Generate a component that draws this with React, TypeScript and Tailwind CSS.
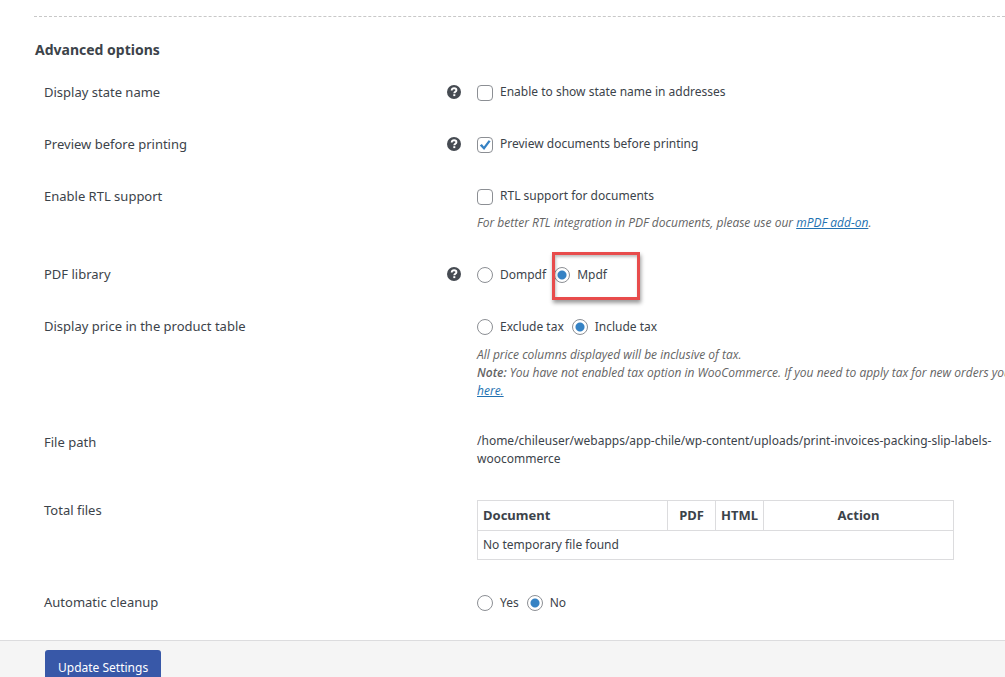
import type { ReactNode } from "react";

const radioClass =
  "size-4 shrink-0 appearance-none rounded-full border border-[#8c8f94] bg-white checked:bg-[radial-gradient(circle,#3582c4_0_4px,transparent_5px)]";

function HelpIcon() {
  return (
    <svg viewBox="0 0 14 14" className="size-3.5" role="img" aria-label="Help">
      <circle cx="7" cy="7" r="7" fill="#464b52" />
      <path
        d="M4.7 5.5C4.7 4 5.7 3.3 7.1 3.3s2.3.7 2.3 1.9c0 1.5-2.1 1.6-2.1 3.1"
        fill="none"
        stroke="#fff"
        strokeWidth="1.9"
      />
      <rect x="6.3" y="9.2" width="2" height="1.9" fill="#fff" />
    </svg>
  );
}

function Row({ label, help, children }: { label: string; help?: boolean; children: ReactNode }) {
  return (
    <div className="flex py-4">
      <div className="w-[403px] shrink-0 text-[13px] leading-5">{label}</div>
      <div className="flex h-5 w-[30px] shrink-0 items-center">{help && <HelpIcon />}</div>
      <div className="min-w-0 flex-1">{children}</div>
    </div>
  );
}

function CheckField({ id, label, checked }: { id: string; label: string; checked?: boolean }) {
  return (
    <div className="flex h-5 gap-[7px]">
      <span className="relative mt-[3px] size-4 shrink-0">
        <input
          id={id}
          type="checkbox"
          defaultChecked={checked}
          className="peer block size-4 appearance-none rounded border border-[#8c8f94] bg-white"
        />
        <svg
          viewBox="0 0 16 16"
          className="pointer-events-none absolute inset-0 hidden size-4 peer-checked:block"
          aria-hidden="true"
        >
          <path d="M2.8 8.6 4.8 7.1 6.9 9.5 11.6 3.2 13.6 4.3 7.1 13Z" fill="#3582c4" />
        </svg>
      </span>
      <label htmlFor={id} className="leading-5">
        {label}
      </label>
    </div>
  );
}

function RadioGroup({
  name,
  options,
  selected,
  highlight,
}: {
  name: string;
  options: string[];
  selected: string;
  highlight?: string;
}) {
  return (
    <div className="flex h-5 gap-2" role="radiogroup" aria-label={name}>
      {options.map((option) => (
        <label key={option} className="relative flex gap-[7px]">
          <input type="radio" name={name} defaultChecked={option === selected} className={`mt-[3px] ${radioClass}`} />
          <span className="leading-[22px]">{option}</span>
          {option === highlight && (
            <span className="pointer-events-none absolute -top-3 -left-0.5 h-12 w-[88px] border-3 border-[#e84c4c] shadow-[1px_3px_4px_rgba(0,0,0,0.4),inset_1px_2px_3px_rgba(0,0,0,0.25)]" />
          )}
        </label>
      ))}
    </div>
  );
}

const noteClass = "font-['Open_Sans',sans-serif] leading-[18px] whitespace-nowrap italic text-[#646464]";
const linkClass = "text-[#2271b1] underline";

export default function App() {
  return (
    <div className="flex h-screen flex-col overflow-hidden bg-white font-['Noto_Sans',sans-serif] text-[12px] leading-5 text-[#3c434a]">
      <main className="shrink-0 pt-4 pb-3">
        <div className="ml-[34px] border-t border-dashed border-[#c8c8c8]" />
        <h2 className="mt-[23px] mb-1.5 pl-[35px] text-[14px] leading-5 font-bold">Advanced options</h2>
        <div className="pl-11">
          <Row label="Display state name" help>
            <CheckField id="state-name" label="Enable to show state name in addresses" />
          </Row>
          <Row label="Preview before printing" help>
            <CheckField id="preview" label="Preview documents before printing" checked />
          </Row>
          <Row label="Enable RTL support">
            <CheckField id="rtl" label="RTL support for documents" />
            <p className={`mt-2 ${noteClass}`}>
              For better RTL integration in PDF documents, please use our{" "}
              <a href="#mpdf" className={linkClass}>
                mPDF add-on
              </a>
              .
            </p>
          </Row>
          <Row label="PDF library" help>
            <RadioGroup name="PDF library" options={["Dompdf", "Mpdf"]} selected="Mpdf" highlight="Mpdf" />
          </Row>
          <Row label="Display price in the product table">
            <RadioGroup name="Display price" options={["Exclude tax", "Include tax"]} selected="Include tax" />
            <p className={`mt-2.5 ${noteClass}`}>
              All price columns displayed will be inclusive of tax.
              <br />
              <b className="font-semibold">Note:</b> You have not enabled tax option in WooCommerce. If you need to
              apply tax for new orders you need to enable it
              <br />
              <a href="#tax" className={linkClass}>
                here.
              </a>
            </p>
          </Row>
          <Row label="File path">
            <p className="leading-[18px] whitespace-nowrap">
              /home/chileuser/webapps/app-chile/wp-content/uploads/print-invoices-packing-slip-labels-
              <br />
              woocommerce
            </p>
          </Row>
          <Row label="Total files">
            <table className="w-[477px] table-fixed border-collapse border border-[#dcdcde] leading-[18px]">
              <thead className="text-[13px]">
                <tr>
                  <th className="w-[190px] border border-[#dcdcde] px-[5px] pt-[5px] pb-1.5 text-left">Document</th>
                  <th className="w-12 border border-[#dcdcde] pt-[5px] pb-1.5">PDF</th>
                  <th className="w-12 border border-[#dcdcde] pt-[5px] pb-1.5">HTML</th>
                  <th className="border border-[#dcdcde] pt-[5px] pb-1.5">Action</th>
                </tr>
              </thead>
              <tbody>
                <tr>
                  <td colSpan={4} className="px-[5px] py-[5px]">
                    No temporary file found
                  </td>
                </tr>
              </tbody>
            </table>
          </Row>
          <Row label="Automatic cleanup">
            <RadioGroup name="Automatic cleanup" options={["Yes", "No"]} selected="No" />
          </Row>
        </div>
      </main>
      <footer className="flex-1 border-t border-[#dcdcde] bg-[#f5f5f5] pt-[9px] pl-[45px]">
        <button type="button" className="h-9 rounded-[3px] bg-[#3858a8] px-[13px] text-white">
          Update Settings
        </button>
      </footer>
    </div>
  );
}
